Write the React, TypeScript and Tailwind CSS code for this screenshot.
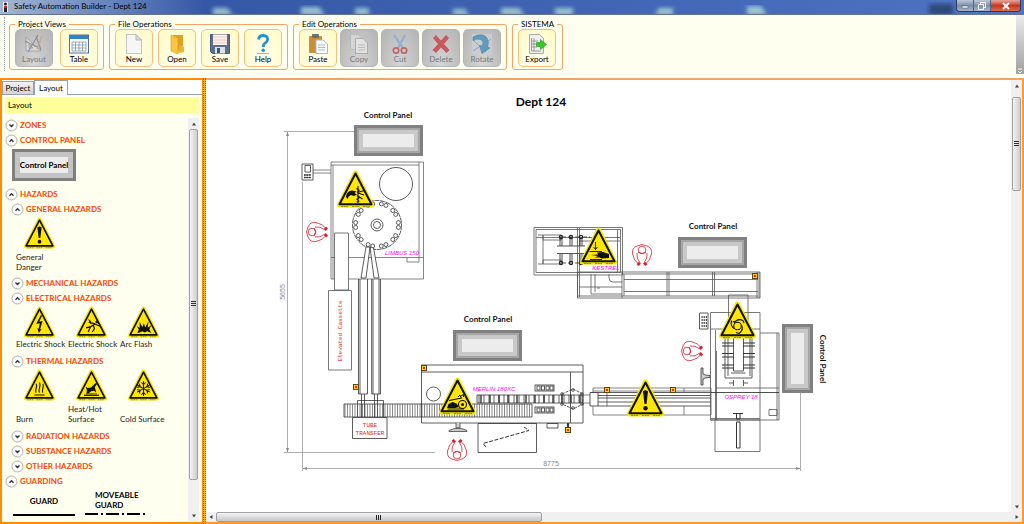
import React, { useState } from 'react';

type SignKind = 'general' | 'shock' | 'body' | 'arc' | 'burn' | 'hot' | 'cold' | 'cut' | 'crush' | 'belt' | 'auto';

const GLYPHS: Record<SignKind, React.ReactNode> = {
  general: (
    <>
      <path d="M16 12.500Q18.500 10 21 12.500L19.500 25H17.500Z" />
      <circle cx="18.500" cy="29.300" r="2.200" />
    </>
  ),
  shock: (
    <path d="M20 11L14.500 21.500L18.800 20.600L17.600 27L15.800 26.200L17.800 32L21 27.400L19.200 27.600L22.200 17.800L18.200 18.800L21.500 11.500Z" />
  ),
  body: (
    <>
      <circle cx="25" cy="19" r="1.700" />
      <path
        d="M23.500 21L17.500 24.500L12 26M20.500 22.500L22 27L19.500 31M22.500 21L17.500 20L16 17M17.500 24.500L14.500 31M23.500 22L29 24"
        fill="none"
        stroke="#111"
        strokeWidth="1.400"
      />
      <path d="M14.500 15L18 18.500L16.500 18.800L20 22L14.500 19.500L16 19Z" />
    </>
  ),
  arc: <path d="M11 32L13 28L10.500 24L14 26L14 19L17 25L19 20.500L20.500 25.500L24.500 18L23.500 26L27.500 23L25.500 28L28 32L23 30L20 31.500L17 30L14 31.500Z" />,
  burn: (
    <path
      d="M12.500 31H24.500M14.500 28C12 25 17 21.500 14.500 17.500M18.500 28C16 25 21 20.500 18.500 16M22.500 28C20 25 25 21.500 22.500 17.500"
      fill="none"
      stroke="#111"
      strokeWidth="1.300"
    />
  ),
  hot: (
    <>
      <path d="M9.500 30.500H27.500V32H9.500Z" />
      <path d="M13 25L11.500 21L14 22.500L18 22L23 17L26 16.500L22.500 21.500L24 28L21.500 26L18 26.500L15 29H12.500Z" />
      <path d="M12 29.500H25" stroke="#111" strokeWidth=".8" />
    </>
  ),
  cold: (
    <path
      d="M18.500 14.500V32M11 19L26 27.500M11 27.500L26 19M16 16L18.500 18.500L21 16M16 30.500L18.500 28L21 30.500M11 22L14.500 21L13.500 17.500M26 22L22.500 21L23.500 17.500M11 24.500L14.500 25.500L13.500 29M26 24.500L22.500 25.500L23.500 29"
      fill="none"
      stroke="#111"
      strokeWidth="1.200"
    />
  ),
  cut: (
    <>
      <path d="M9 27Q9.500 21 15 20.500L19.500 21.500L17.500 23L20 24.500L17 26L14 25Q11 26 10.500 29Z" />
      <path
        d="M21 16V33M19.500 18.500L22.500 20.500M20 22.500L27.500 20.500M20 25.500L25.500 29M19.500 29.500L22.500 27.500M21 23L27 25M19.500 32L22.500 31"
        fill="none"
        stroke="#111"
        strokeWidth="1.100"
      />
    </>
  ),
  crush: (
    <>
      <path d="M15.500 15V22.500M13.500 20L15.500 22.500L17.500 20M9.500 24.500H22" fill="none" stroke="#111" strokeWidth=".9" />
      <path d="M17 25.500L23 25L29 27V31L21.500 31.500L19.500 30.500H14.500L18 29L11 28L18 27.500Z" />
      <path d="M10 32.500H22" stroke="#111" strokeWidth=".9" />
    </>
  ),
  belt: (
    <>
      <path d="M8 31L9.500 27L13.500 25L17.500 26.500L20 30L16.500 31H8Z" />
      <path d="M10 23.500L23 21M8.500 32H25" stroke="#111" strokeWidth="1.200" />
      <circle cx="23.500" cy="27.500" r="4" fill="none" stroke="#111" strokeWidth="1.100" />
      <circle cx="23.500" cy="27.500" r="1.500" />
      <path d="M19 20L21 18L22 20.500M22 19L24.500 17.500V20" fill="none" stroke="#111" strokeWidth="1" />
    </>
  ),
  auto: (
    <>
      <circle cx="18.500" cy="25" r="3.800" fill="none" stroke="#111" strokeWidth="1.100" />
      <path
        d="M15.500 22Q18 17 24 19.500M22.500 24Q25 28.500 20 32.500M15 27.500Q11 25 12.500 19.500M13.500 21L17.500 20M24 19.500L25 22M20 32.500L17 31.500"
        fill="none"
        stroke="#111"
        strokeWidth="1.100"
      />
    </>
  ),
};

function SignShape({ kind }: { kind: SignKind }) {
  return (
    <g>
      <path d="M18.500 3L34.500 35H2.500Z" fill="#f7e600" stroke="#f7e600" strokeWidth="5" strokeLinejoin="round" />
      <path d="M18.500 3.500L34.500 34.300H2.500Z" fill="#ffe608" stroke="#111" strokeWidth="2" strokeLinejoin="round" />
      <g fill="#111">{GLYPHS[kind]}</g>
      <path d="M4 36.600H11M15 36.600H22M26 36.600H33" stroke="#777000" strokeWidth=".8" strokeDasharray="2 .6" />
    </g>
  );
}

/* ---------- toolbar ---------- */

const ICONS: Record<string, React.ReactNode> = {
  Layout: (
    <>
      <path d="M2 17V3L17 17Z" fill="#d8d8d8" stroke="#a4a4a4" />
      <path d="M5 14V10L9 14Z" fill="#c0c0c0" stroke="#aaa" />
      <path d="M1 7L13 13M14 1L4 18M12 2L17 16" stroke="#8a919b" strokeWidth="1.200" />
      <path d="M18 2L13 15" stroke="#cfa77e" strokeWidth="1.500" />
    </>
  ),
  Table: (
    <>
      <rect x=".5" y="1" width="19" height="18" fill="#fff" stroke="#55708f" />
      <rect x="1" y="1" width="18" height="4" fill="#2e86c8" />
      <path d="M3 8H17V17H3ZM3 11H17M3 14H17M6.500 8V17M10 8V17M13.500 8V17" fill="none" stroke="#8494a8" strokeWidth=".8" />
    </>
  ),
  New: (
    <>
      <path d="M2.500.5H12L17.500 6V19.500H2.500Z" fill="#f6f6f6" stroke="#c3c3c3" />
      <path d="M12 .5V6H17.500Z" fill="#dcdcdc" stroke="#b8b8b8" />
    </>
  ),
  Open: (
    <>
      <path d="M6 1H16V17H6Z" fill="#e2a01f" />
      <path d="M4 1L11 4V20L4 17Z" fill="#f8c545" stroke="#d79a1c" strokeWidth=".6" />
      <path d="M13 11L17 13V18L11 19Z" fill="#efb32f" />
    </>
  ),
  Save: (
    <>
      <path d="M.5.5H19.500V19.500H2.500L.5 17.500Z" fill="#5c6f8f" stroke="#485a78" />
      <path d="M3 .5H17V11H3Z" fill="#fff3f0" />
      <path d="M3 3H17M3 6H17M3 9H17" stroke="#f0b4ac" strokeWidth=".8" />
      <path d="M5 13H15V19.500H5Z" fill="#dde3ec" />
      <path d="M7 14H10V19H7Z" fill="#44546e" />
    </>
  ),
  Help: (
    <>
      <path d="M5.500 5.500Q6 1.500 10.300 1.500Q14.800 1.700 14.600 5.500Q14.400 7.800 12 9.200Q10.200 10.400 10.200 13" fill="none" stroke="#2392cf" strokeWidth="2.800" />
      <circle cx="10.200" cy="16.200" r="1.700" fill="#2392cf" />
      <path d="M4 19.500H16" stroke="#9fb2b8" />
    </>
  ),
  Paste: (
    <>
      <rect x="1" y="2" width="13" height="17" rx="1" fill="#c98f38" />
      <rect x="4" y="0" width="7" height="4" rx="1" fill="#6f6f6f" />
      <path d="M8 6H15L19.500 10V19.500H8Z" fill="#fafcff" stroke="#aab6c5" />
      <path d="M10 11H17M10 13.500H17M10 16H17" stroke="#a9b9cd" />
    </>
  ),
  Copy: (
    <>
      <path d="M1.500.5H9L13 4.500V15.500H1.500Z" fill="#d5d5d5" stroke="#bbb" />
      <path d="M6.500 4.500H14L18.500 9V19.500H6.500Z" fill="#e2e2e2" stroke="#aaa" />
      <path d="M9 11H16M9 13.500H16M9 16H16" stroke="#bbb" />
    </>
  ),
  Cut: (
    <>
      <path d="M4 1L13 14M15 1L8 14" stroke="#94b1cf" strokeWidth="2.600" />
      <circle cx="6" cy="16.500" r="2.700" fill="none" stroke="#bd6666" strokeWidth="1.700" />
      <circle cx="14" cy="16.500" r="2.700" fill="none" stroke="#bd6666" strokeWidth="1.700" />
    </>
  ),
  Delete: <path d="M2 4L5 1L10 6.500L15 1L18 4L13 10L18.500 16L15.500 19L10 13.500L5 19L1.500 16L7 10Z" fill="#c8595c" />,
  Rotate: (
    <>
      <rect x="0" y="0" width="20" height="20" fill="#c9cdd1" />
      <path d="M1 17L19 5M1 6L14 18" stroke="#93a4b3" />
      <path d="M1 3Q10-2 15 4Q17.500 8 15.500 13L18 14L10 19.500L7.500 11.500L10.500 12.500Q12 8 9.500 6Q6.500 4 1 6.500Z" fill="#5e9bbd" stroke="#4c86a8" strokeWidth=".6" />
    </>
  ),
  Export: (
    <>
      <path d="M2.500 .5H12.500L16.500 4.500V19.500H2.500Z" fill="#efefef" stroke="#aaa" />
      <path d="M4.500 4V17M7 4V17M4.500 7H11M4.500 10H10M4.500 13H10M4.500 17H14" stroke="#888" strokeWidth=".8" />
      <path d="M9.500 8.500H13.500V5.500L19.500 10.500L13.500 15.500V12.500H9.500Z" fill="#36c72c" stroke="#1f9a1a" strokeWidth=".6" />
    </>
  ),
};

const GROUPS = [
  { title: 'Project Views', off: ['Layout'], items: ['Layout', 'Table'], gap: 'gap-[7px]' },
  { title: 'File Operations', off: [], items: ['New', 'Open', 'Save', 'Help'], gap: 'gap-[5px]' },
  { title: 'Edit Operations', off: ['Copy', 'Cut', 'Delete', 'Rotate'], items: ['Paste', 'Copy', 'Cut', 'Delete', 'Rotate'], gap: 'gap-[3px]' },
  { title: 'SISTEMA', off: [], items: ['Export'], gap: 'gap-[3px]' },
];

function ToolButton({ name, off }: { name: string; off: boolean }) {
  return (
    <button
      type="button"
      disabled={off}
      className={`flex size-[38px] flex-col items-center justify-end rounded-[5px] border ${
        off
          ? 'border-[#b4b4b4] bg-radial-[at_50%_100%] from-[#d6d6d6] to-[#b3b3b3] text-[#777]'
          : 'border-[#f8bd7c] bg-radial-[at_50%_100%] from-[#fffff4] to-[#fffbc4] text-black'
      }`}
    >
      <svg viewBox="0 0 20 20" className="size-5" fill="none">
        {ICONS[name]}
      </svg>
      <span className="h-3 text-[8px] leading-[10px]">{name}</span>
    </button>
  );
}

function Toolbar() {
  return (
    <div className="flex h-[63px] shrink-0 border-b-[3px] border-white bg-[#fffff0]">
      <div className="mt-0.5 ml-1 h-[54px] border-l border-dotted border-gray-400" />
      <div className="flex flex-1 items-start gap-[5px] pt-1 pl-1">
        {GROUPS.map((g) => (
          <fieldset key={g.title} className="min-w-0 rounded-[3px] border border-[#f4a460] px-[5px] pb-0.5">
            <legend className="px-[3px] text-[8px] leading-[10px] whitespace-nowrap text-black">{g.title}</legend>
            <div className={`flex ${g.gap}`}>
              {g.items.map((i) => (
                <ToolButton key={i} name={i} off={g.off.includes(i)} />
              ))}
            </div>
          </fieldset>
        ))}
      </div>
      <button
        type="button"
        aria-label="Toolbar options"
        className="flex h-[59px] w-2 items-end justify-center bg-linear-to-b from-[#ececec] to-[#a0a0a0]"
      >
        <svg viewBox="0 0 6 6" className="size-1.5">
          <path d="M1 1H5M1 3L3 5L5 3" fill="none" stroke="#fff" />
        </svg>
      </button>
    </div>
  );
}

/* ---------- window chrome ---------- */

function TitleBar() {
  return (
    <header className="flex h-[15px] shrink-0 items-start border-b border-[#66748c] bg-linear-to-r from-[#a3b6d2] via-[#3558a6] via-20% to-[#4e74c4] pl-[3px]">
      <svg viewBox="0 0 5 10" className="mt-0.5 mr-1.5 h-2.5 w-[5px]">
        <path d="M0 0H5V10H0Z" fill="#eee" />
        <circle cx="2.500" cy="2" r="1.500" fill="#222" />
        <path d="M1 4H4V6H1Z" fill="#c22" />
        <path d="M1 6H4V10H1Z" fill="#222" />
      </svg>
      <h1 className="flex-1 text-[8px] leading-[13px] text-black">Safety Automation Builder - Dept 124</h1>
      <svg viewBox="0 0 755 14" className="h-3.5 w-[755px] shrink" preserveAspectRatio="none">
        <defs>
          <filter id="soft">
            <feGaussianBlur stdDeviation="2" />
          </filter>
        </defs>
        <g fill="#b4dcd8" opacity=".8" filter="url(#soft)">
          <path d="M12 15V8H26L32 15ZM100 15V7H118L124 15ZM154 15V8H168V15ZM252 15V9H264L268 15ZM300 15V8H318L324 15ZM354 15V8H372V15ZM454 15L458 8H472V15ZM546 15V6H560L566 15Z" />
        </g>
        <path d="M728 4H752V15H728Z" fill="#283f66" opacity=".8" filter="url(#soft)" />
      </svg>
      <div className="mr-[3px] flex h-3 shrink-0 overflow-hidden rounded-b border border-t-0 border-[#2d3c55]">
        <button type="button" aria-label="Minimize" className="flex w-[17px] items-center justify-center border-r border-[#50627f] bg-linear-to-b from-[#bcc8d8] via-[#7d8fa9] to-[#a4b5cb]">
          <svg viewBox="0 0 8 8" className="size-2">
            <path d="M1 4H7V6H1Z" fill="#fff" stroke="#445" strokeWidth=".5" />
          </svg>
        </button>
        <button type="button" aria-label="Restore" className="flex w-[17px] items-center justify-center border-r border-[#50627f] bg-linear-to-b from-[#bcc8d8] via-[#7d8fa9] to-[#a4b5cb]">
          <svg viewBox="0 0 8 8" className="size-2" fill="none" stroke="#fff">
            <path d="M2.500 2.500V.5H7.500V5.500H6M.5 2.500H5.500V7.500H.5Z" />
          </svg>
        </button>
        <button type="button" aria-label="Close" className="flex w-[29px] items-center justify-center bg-linear-to-b from-[#e5a79b] via-[#c5341d] to-[#d96a4c]">
          <svg viewBox="0 0 8 8" className="size-2">
            <path d="M1 1L7 7M7 1L1 7" stroke="#fff" strokeWidth="1.800" />
          </svg>
        </button>
      </div>
    </header>
  );
}

function Arrow({ d }: { d: string }) {
  return (
    <svg viewBox="0 0 6 6" className="size-1.5 shrink-0" fill="#444">
      <path d={d} />
    </svg>
  );
}

function VScroll({ thumb }: { thumb: string }) {
  return (
    <div className="flex w-[11px] shrink-0 flex-col items-center bg-[#f0f0f0]">
      <div className="flex h-[11px] w-full items-center justify-center">
        <Arrow d="M3 1.500L5 4.500H1Z" />
      </div>
      <div className="flex w-full flex-1 flex-col">
        <div className={`mx-px flex items-center justify-center rounded-[2px] border border-[#a0a0a0] bg-linear-to-r from-[#f4f4f4] to-[#cdcdd0] ${thumb}`}>
          <svg viewBox="0 0 5 6" className="h-1.5 w-[5px]">
            <path d="M0 .5H5M0 2.500H5M0 4.500H5" stroke="#333" />
          </svg>
        </div>
      </div>
      <div className="flex h-[11px] w-full items-center justify-center">
        <Arrow d="M3 4.500L5 1.500H1Z" />
      </div>
    </div>
  );
}

function HScroll() {
  return (
    <div className="flex h-[10px] shrink-0 items-stretch bg-[#f0f0f0]">
      <div className="flex w-2.5 items-center justify-center">
        <Arrow d="M1.500 3L4.500 1V5Z" />
      </div>
      <div className="flex flex-1">
        <div className="flex w-[41%] items-center justify-center rounded-[2px] border border-[#a0a0a0] bg-linear-to-b from-[#f4f4f4] to-[#c4c6ca]">
          <svg viewBox="0 0 6 5" className="h-[5px] w-1.5">
            <path d="M.5 0V5M2.500 0V5M4.500 0V5" stroke="#222" />
          </svg>
        </div>
      </div>
      <div className="flex w-2.5 items-center justify-center">
        <Arrow d="M4.500 3L1.500 1V5Z" />
      </div>
    </div>
  );
}

/* ---------- palette ---------- */

interface SectionProps {
  title: string;
  nested?: boolean;
  initial?: boolean;
  children?: React.ReactNode;
}

function Section({ title, nested, initial, children }: SectionProps) {
  const [open, setOpen] = useState(!!initial);
  return (
    <section>
      <button
        type="button"
        aria-expanded={open}
        onClick={() => setOpen(!open)}
        className={`flex h-[15px] items-center gap-[2px] text-[8px] leading-[15px] font-bold whitespace-nowrap text-[#ff4500] ${nested ? 'pl-1.5' : ''}`}
      >
        <svg viewBox="0 0 13 13" className="size-[13px]" fill="none">
          <circle cx="6.500" cy="6.500" r="5.500" fill="#fff" stroke="#999" strokeWidth=".8" />
          <path d={open ? 'M4.500 7.800L6.500 5.800L8.500 7.800' : 'M4.500 5.500L6.500 7.500L8.500 5.500'} stroke="#333" strokeWidth="1.400" />
        </svg>
        {title}
      </button>
      {open && children}
    </section>
  );
}

function PaletteSign({ kind, label }: { kind: SignKind; label: string }) {
  return (
    <div className="flex w-[52px] flex-col justify-between">
      <svg viewBox="0 0 37 38" className="ml-2 h-8 w-[31px]">
        <SignShape kind={kind} />
      </svg>
      <span className="text-[8px] leading-[10px] text-[#222]">{label}</span>
    </div>
  );
}

function Palette() {
  return (
    <aside className="flex w-[203px] shrink-0 flex-col border-2 border-r border-[#ff8c00] bg-[#fffff0]">
      <div role="tablist" className="flex h-[15px] shrink-0 items-end border-b border-gray-400 bg-white">
        <button role="tab" aria-selected="false" type="button" className="h-[13px] w-8 border border-b-0 border-gray-400 bg-linear-to-b from-[#f3f3f3] to-[#d4d4d4] text-[8px] leading-3">
          Project
        </button>
        <button role="tab" aria-selected="true" type="button" className="-mb-px h-[15px] w-[34px] border border-b-0 border-gray-400 bg-white text-[8px] leading-[14px]">
          Layout
        </button>
      </div>
      <div className="mx-[3px] mt-0.5 shrink-0 bg-[#ffff99] px-[3px] text-[8px] leading-4">Layout</div>
      <div className="mt-[5px] mr-[3px] flex min-h-0 flex-1">
        <div className="min-w-0 flex-1 overflow-hidden pl-[3px]">
          <Section title="ZONES" />
          <Section title="CONTROL PANEL" initial>
            <div className="mt-px mb-1.5 ml-[7px] flex h-8 w-16 items-center border-[3px] border-[#808080] bg-[#c4c4c4] p-[5px]">
              <div className="flex h-full w-full items-center justify-center bg-[#ececec] text-[8px] font-bold whitespace-nowrap">Control Panel</div>
            </div>
          </Section>
          <Section title="HAZARDS" initial>
            <Section title="GENERAL HAZARDS" nested initial>
              <div className="mb-1 flex h-[55px] pl-[11px]">
                <PaletteSign kind="general" label="General Danger" />
              </div>
            </Section>
            <Section title="MECHANICAL HAZARDS" nested />
            <Section title="ELECTRICAL HAZARDS" nested initial>
              <div className="mb-[5px] flex h-[43px] pl-[11px]">
                <PaletteSign kind="shock" label="Electric Shock" />
                <PaletteSign kind="body" label="Electric Shock" />
                <PaletteSign kind="arc" label="Arc Flash" />
              </div>
            </Section>
            <Section title="THERMAL HAZARDS" nested initial>
              <div className="mb-[5px] flex h-[55px] pl-[11px]">
                <PaletteSign kind="burn" label="Burn" />
                <PaletteSign kind="hot" label="Heat/Hot Surface" />
                <PaletteSign kind="cold" label="Cold Surface" />
              </div>
            </Section>
            <Section title="RADIATION HAZARDS" nested />
            <Section title="SUBSTANCE HAZARDS" nested />
            <Section title="OTHER HAZARDS" nested />
          </Section>
          <Section title="GUARDING" initial>
            <div className="mt-px flex gap-2.5 pl-2 text-[8px] leading-[10px] font-bold">
              <div className="flex w-[62px] flex-col items-center justify-center gap-2">
                <span className="mt-1.5">GUARD</span>
                <div className="h-0.5 w-full bg-black" />
              </div>
              <div className="flex flex-col gap-[3px]">
                <span className="w-[50px] pl-2.5">MOVEABLE GUARD</span>
                <svg viewBox="0 0 60 2" className="h-0.5 w-[60px]">
                  <path d="M0 1H60" stroke="#000" strokeWidth="2" strokeDasharray="13 3 2 3" />
                </svg>
              </div>
            </div>
          </Section>
        </div>
        <div className="mb-px flex">
          <VScroll thumb="h-[92%]" />
        </div>
      </div>
    </aside>
  );
}

/* ---------- drawing sheet ---------- */

function PanelBox({ x, y, label, upright }: { x: number; y: number; label?: [number, number]; upright?: boolean }) {
  const w = upright ? 31 : 69;
  const h = upright ? 69 : 31;
  return (
    <g>
      <rect x={x} y={y} width={w} height={h} fill="#808080" />
      <rect x={x + 3} y={y + 3} width={w - 6} height={h - 6} fill="#a6a6a6" />
      <rect x={x + 5} y={y + 5} width={w - 10} height={h - 10} fill="#c8c8c8" />
      <rect x={x + 9} y={y + 9} width={w - 18} height={h - 18} fill="#ececec" />
      {label && (
        <text x={label[0]} y={label[1]} textAnchor="middle" transform={upright ? `rotate(90 ${label[0]} ${label[1]})` : undefined} className="text-[8px] font-bold" fill="#111">
          Control Panel
        </text>
      )}
    </g>
  );
}

function Operator({ x, y, turn }: { x: number; y: number; turn: number }) {
  return (
    <g transform={`translate(${x} ${y}) rotate(${turn})`} fill="none" stroke="#d0202c" strokeWidth=".8">
      <circle cx="0" cy="5" r="3.800" />
      <path d="M-4 3Q0 0 4 3" />
      <path d="M-3.500 -9Q-8 -6 -9.500 1Q-10.500 7 -5 9Q0 12 5 9Q10.500 7 9.500 1Q8 -6 3.500 -9" />
      <path d="M-2 -8Q-6 -3 -5 2M2 -8Q6 -3 5 2" />
      <path d="M-5 -9.500L-3 -10.500L-1.500 -8.500L-3.500 -7.500ZM5 -9.500L3 -10.500L1.500 -8.500L3.500 -7.500Z" fill="#d0202c" />
    </g>
  );
}

// vertical ticks between two x positions
function ticks(from: number, to: number, step: number, top: number, bottom: number) {
  let d = '';
  for (let x = from; x <= to; x += step) d += `M${x} ${top}V${bottom}`;
  return d;
}

const HOLES = Array.from({ length: 10 }, (_, i) => i * 36).flatMap((a) => [a - 6.5, a + 6.5]);
const SENSORS = [
  [356, 387],
  [424, 368],
  [568, 430],
  [607, 390],
  [673, 390],
  [755, 276],
];
const SIGNS: [SignKind, number, number][] = [
  ['cut', 337, 170],
  ['crush', 580, 227],
  ['auto', 719, 301],
  ['belt', 439, 377],
  ['general', 627, 379],
];

function Sheet() {
  return (
    <svg viewBox="206 80 805 432" className="h-[432px] w-[805px] shrink-0" fill="none" stroke="#333" strokeWidth=".8">
      {/* dimensions */}
      <path d="M284 131.500H354M287.500 132V452M284 452.500H435M302.500 182V471M303 468.500H800M800.500 393V471" stroke="#999" />
      <path d="M287.500 132L286 136H289ZM287.500 452L286 448H289ZM303 468.500L307 467V470ZM800 468.500L796 467V470Z" fill="#888" stroke="none" />

      {/* limbus */}
      <path d="M331 162H423.500V279H331ZM331 165H419M419 162V262H407V257.500M331 257.500H423.500M333 165V279M313 170H331M313 173H331" stroke="#666" />
      <path d="M302 164H313V180H302ZM305 165.500H310.500V172H305ZM304 175H311M304 177.500H311" />
      <path d="M304 175H311M304 177.500H311" strokeDasharray="1.500 1" strokeWidth="1.500" />
      <circle cx="396" cy="184" r="16.500" />
      <circle cx="377" cy="225" r="24.500" strokeDasharray="5 .6" fill="#fff" />
      <circle cx="377" cy="225" r="6" />
      <circle cx="377" cy="225" r="3.500" />
      {HOLES.map((a) => (
        <circle key={a} cx={377 + 21.5 * Math.cos((a * Math.PI) / 180)} cy={225 + 21.5 * Math.sin((a * Math.PI) / 180)} r="2" />
      ))}
      <path d="M366 247L361 278H366L370 247ZM370 247L374 278H379L373.500 248Z" fill="#fff" />
      <path d="M334.500 233H348.500V290H334.500ZM328.500 290.500H351.500V370H328.500Z" fill="#fff" stroke="#555" />
      <path d="M358.500 279V394H367.500V279M360 279V394M371.700 279V394H380.500V279M373 279V394M379 279V394" />

      {/* tube transfer and lower conveyor */}
      <path d="M344 404H532V417H344ZM357.500 417V400.500H383.500V417M361.500 394V417M364.500 394V417M374.500 394V417M377.500 394V417" />
      <path d={ticks(345, 421, 2.5, 404, 417)} stroke="#555" strokeWidth=".7" />
      <path d={ticks(422, 531, 2.5, 404, 417)} stroke="#555" strokeWidth=".7" />
      <path d="M352.500 417.500H387V438.500H352.500Z" fill="#fff" />

      {/* merlin */}
      <path d="M421.500 365H583V423H421.500ZM421.500 372H583M570.500 372V423M547 423.500H558V428H547ZM478 423.500H536.500V452.500H478Z" />
      <circle cx="433.500" cy="394" r="7" />
      <path d="M477 395H582V403H477Z" />
      <path d={ticks(479, 580, 5, 395, 403)} />
      <path d={ticks(481, 580, 9, 395, 403)} strokeWidth="1.400" />
      <path d="M562 394L573 389L583 394V404L573 409L562 404Z" strokeDasharray="3 1" />
      {[
        [562, 394],
        [573, 390],
        [582, 394],
        [562, 404],
        [573, 408],
        [582, 404],
      ].map(([x, y]) => (
        <circle key={`${x}-${y}`} cx={x} cy={y} r="1.300" />
      ))}
      {[385, 407].map((y) => (
        <g key={y}>
          <rect x="535" y={y} width="19" height="6" />
          {[537, 541.5, 546, 550].map((x) => (
            <rect key={x} x={x} y={y + 1} width="3" height="4" />
          ))}
        </g>
      ))}
      <path d="M486 447L483 443.500L529 430.500L524 427" strokeDasharray="4 1.500" strokeWidth="1" />
      <path d="M456 423V428H460V423M449 430.500Q458 426 467 430.500V431.500H449Z" fill="#ccc" stroke="#444" />
      <path d="M568 423V428" strokeWidth="2" />

      {/* transfer beam */}
      <path d="M593 388H711V415H593ZM593 391H711M583 395H590M583 403H590M607 392V406M684 388V392M684 406V415" stroke="#666" />
      <path d="M598 395.500H711M598 398H711M598 402H711M598 406H711M590 392.500H711" />
      <path d="M590 392.500H598V406H590Z" fill="#fff" />

      {/* kestrel */}
      <g stroke="#555">
        <path d="M534 227.500H622.500V275H534ZM536 229.500H620.500V272.500H536ZM536 237.500H620M579 241H620M577.500 228V297M579.500 228V297M617.500 230V272" />
        <path d="M577.500 272H760V298H577.500ZM622 274H758M578 296H758M624 279.500H758M624 291.500H758M622 272V298M624 274V296M667 272V296M669 272V296M712.500 272V296M714.500 272V296M757 272V298M759 272V298" />
        <path d="M591 274V294H622M595 274V292M579 287H622M609 274V278Q609 282 613 282H622M597 288H600" />
        <path d="M543 235H561V240H543ZM543 260H561V264H543ZM538 235H543M538 264H543M543 235V264" />
        <path d="M557 246H585M557 253.500H585" strokeWidth="1.200" />
      </g>
      {[561, 571, 581].map((x) => (
        <g key={x} stroke="#222">
          <path d={`M${x - 1} 237V246M${x + 1} 237V246M${x - 1} 254V262M${x + 1} 254V262`} />
          <circle cx={x} cy="237" r="1.600" strokeWidth="1.200" />
          <circle cx={x} cy="263" r="1.600" strokeWidth="1.200" />
        </g>
      ))}
      <path d="M561 237H590M561 263H590" strokeDasharray="5 2" />

      {/* osprey */}
      <g stroke="#555">
        <path d="M710.500 312.500H760V420H710.500ZM710.500 329H760M728.500 295H748V329H728.500ZM760 333H779V420M777 333V420M710.500 420H779M710.500 418.500H760M715 420V451.500H760V420" />
        <path d="M715.500 330V420M716.500 351V420M716 388H779M769 409.500H777V415.500H769Z" />
        <path d="M711 392.500H779" stroke="#222" />
      </g>
      <path d="M725 336V378H752V336M728 336V376M750 336V376M733.500 336V371H743.500V336M731 373H745.500M729 383H733M733.500 380V386M743.500 380V386M744 383H748" />
      {[343, 346, 353.5, 357, 365, 368].map((y) => (
        <path key={y} d={`M722 ${y}H734M743 ${y}H755`} strokeWidth="1.100" />
      ))}
      <path d="M733 413.500H743M736.500 414V419H740V414M736.500 422H740V448H736.500Z" strokeWidth="1" />
      <path d="M699.500 313H708V329H699.500Z" />
      <path d="M701.500 317H707M701.500 320H707M701.500 323H707M701.500 326H707" stroke="#222" strokeWidth="1.300" strokeDasharray="1.300 .8" />
      <path d="M701 368H703V374Q705 375.500 710 375.500V377.500Q705 377.500 703 379V385H701Z" fill="#ccc" />

      <Operator x={317} y={232} turn={90} />
      <Operator x={457} y={450} turn={0} />
      <Operator x={642} y={255} turn={180} />
      <Operator x={692} y={351} turn={90} />

      <g stroke="none" textAnchor="middle">
        <g fontFamily="'Liberation Mono', monospace" className="text-[6px]" fill="#ee1c24">
          <text x="342" y="331" transform="rotate(-90 342 331)">
            Elevated Cassette
          </text>
          <text x="370" y="427">
            TUBE
          </text>
          <text x="370" y="435">
            TRANSFER
          </text>
        </g>
        <g fontFamily="'Liberation Sans', sans-serif" fill="#ff00ff" className="text-[6px] italic">
          <text x="402" y="255">
            LIMBUS 150
          </text>
          <text x="494" y="391">
            MERLIN 180XC
          </text>
          <text x="606" y="270">
            KESTREL
          </text>
          <text x="741" y="399">
            OSPREY 18
          </text>
        </g>
        <g fontFamily="'Liberation Sans', sans-serif" fill="#888" className="text-[7px]">
          <text x="285" y="292" transform="rotate(-90 285 292)">
            5655
          </text>
          <text x="551" y="466">
            8775
          </text>
        </g>
        <text x="541" y="106" className="text-[12px] font-bold" fill="#000">
          Dept 124
        </text>
      </g>

      <g stroke="none">
        {SENSORS.map(([x, y]) => (
          <g key={`${x}-${y}`}>
            <rect x={x - 3} y={y - 3} width="6" height="6" fill="#54480c" />
            <rect x={x - 2} y={y - 2} width="4" height="4" fill="#ffe11a" />
            <circle cx={x} cy={y} r="1.300" fill="#e8261c" />
          </g>
        ))}
        <PanelBox x={354} y={125} label={[388, 118]} />
        <PanelBox x={678} y={237} label={[713, 229]} />
        <PanelBox x={453} y={330} label={[488, 322]} />
        <PanelBox x={782} y={324} label={[820, 359]} upright />
        {SIGNS.map(([kind, x, y]) => (
          <g key={kind} transform={`translate(${x} ${y})`}>
            <SignShape kind={kind} />
          </g>
        ))}
      </g>
    </svg>
  );
}

export default function App() {
  return (
    <div className="flex h-screen flex-col overflow-hidden bg-white font-['Lato','Open_Sans',sans-serif] text-black">
      <TitleBar />
      <Toolbar />
      <div className="flex min-h-0 flex-1">
        <Palette />
        <div className="w-[3px] shrink-0 border-x border-dotted border-[#8a6a10] bg-[#f5b400]" />
        <main className="flex min-w-0 flex-1 flex-col border-2 border-l-0 border-[#ff9a2a] border-t-[#f4a460]">
          <div className="flex min-h-0 flex-1">
            <div className="min-w-0 flex-1 overflow-hidden">
              <Sheet />
            </div>
            <VScroll thumb="mt-1.5 h-[23%]" />
          </div>
          <HScroll />
        </main>
      </div>
    </div>
  );
}
